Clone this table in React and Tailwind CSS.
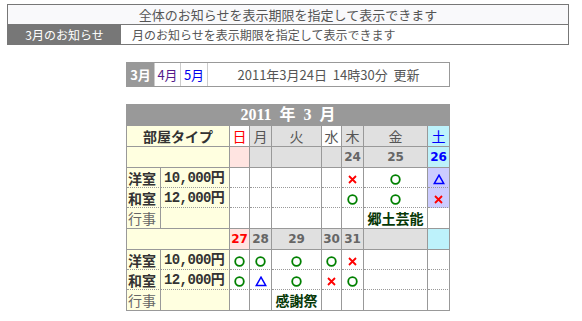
const JP = "font-['Noto_Sans_CJK_JP',sans-serif]"

const days = [
  { label: '日', color: 'text-[#ff0000]', head: 'bg-white', date: 'bg-[#ffe4e1]' },
  { label: '月', color: 'text-[#555]', head: 'bg-[#e0e0e0]', date: 'bg-[#e0e0e0]' },
  { label: '火', color: 'text-[#555]', head: 'bg-[#e0e0e0]', date: 'bg-[#e0e0e0]' },
  { label: '水', color: 'text-[#555]', head: 'bg-white', date: 'bg-[#e0e0e0]' },
  { label: '木', color: 'text-[#555]', head: 'bg-[#e0e0e0]', date: 'bg-[#e0e0e0]' },
  { label: '金', color: 'text-[#555]', head: 'bg-[#e0e0e0]', date: 'bg-[#e0e0e0]' },
  { label: '土', color: 'text-[#0000ff]', head: 'bg-[#bdf2fb]', date: 'bg-[#bdf2fb]' },
]

const weeks = [
  {
    dates: [null, null, null, null, 24, 25, 26],
    western: ['', '', '', '', 'x', 'o', 't'],
    japanese: ['', '', '', '', 'o', 'o', 'x'],
    events: ['', '', '', '', '', '郷土芸能', ''],
    lavender: [6],
  },
  {
    dates: [27, 28, 29, 30, 31, null, null],
    western: ['o', 'o', 'o', 'o', 'x', '', ''],
    japanese: ['o', 't', 'o', 'x', 'o', '', ''],
    events: ['', '', '感謝祭', '', '', '', ''],
    lavender: [],
  },
]

// availability marks: o = 空き, t = 残りわずか, x = 満室
function Mark({ m }) {
  if (m === 'o')
    return (
      <svg width="11" height="11" viewBox="0 0 11 11" className="inline-block align-middle">
        <circle cx="5.5" cy="5.5" r="4.3" fill="none" stroke="#008000" strokeWidth="1.8" />
      </svg>
    )
  if (m === 'x')
    return (
      <svg width="11" height="11" viewBox="0 0 11 11" className="inline-block align-middle">
        <path d="M2 2L9 9M9 2L2 9" stroke="#ff0000" strokeWidth="1.8" />
      </svg>
    )
  if (m === 't')
    return (
      <svg width="12" height="11" viewBox="0 0 12 11" className="inline-block align-middle">
        <path d="M6 1.2L10.8 9.6H1.2Z" fill="none" stroke="#0000ff" strokeWidth="1.5" />
      </svg>
    )
  return null
}

const cell = 'border-r border-b border-[#999] p-0 text-center align-middle'
const dotted = '[border-bottom-style:dotted]'

function Week({ w }) {
  return (
    <>
      <tr className="h-[21px]">
        <td colSpan={2} className={`${cell} bg-[#ffffe0]`}></td>
        {w.dates.map((d, i) => (
          <td
            key={i}
            className={`${cell} ${days[i].date} font-['DejaVu_Sans',sans-serif] text-[12px] font-bold ${
              i === 0 ? 'text-[#ff0000]' : i === 6 ? 'text-[#0000ff]' : 'text-[#666]'
            }`}
          >
            {d}
          </td>
        ))}
      </tr>
      {[
        { name: '洋室', price: '10,000円', data: w.western },
        { name: '和室', price: '12,000円', data: w.japanese },
      ].map((r) => (
        <tr key={r.name} className="h-[20px]">
          <td className={`${cell} ${dotted} bg-[#ffffe0] text-left pl-[1px] text-[14px] font-bold text-[#333]`}>
            {r.name}
          </td>
          <td className={`${cell} ${dotted} bg-[#ffffe0] text-left pl-[3px] font-['Liberation_Mono','Noto_Sans_CJK_JP',monospace] text-[14px] tracking-[-0.6px] font-bold text-[#333]`}>
            {r.price}
          </td>
          {r.data.map((m, i) => (
            <td key={i} className={`${cell} ${dotted} ${w.lavender.includes(i) ? 'bg-[#ccccff]' : 'bg-white'}`}>
              <Mark m={m} />
            </td>
          ))}
        </tr>
      ))}
      <tr className="h-[21px]">
        <td className={`${cell} bg-[#ffffe0] text-left pl-[1px] text-[14px] text-[#666]`}>行事</td>
        <td className={`${cell} bg-[#ffffe0]`}></td>
        {w.events.map((e, i) => (
          <td key={i} className={`${cell} bg-white text-[14px] font-bold text-[#063806] whitespace-nowrap`}>
            {e}
          </td>
        ))}
      </tr>
    </>
  )
}

export default function App() {
  return (
    <div className={`w-[582px] h-[321px] bg-white pt-[4px] ${JP}`}>
      {/* notice box */}
      <div className="ml-[7px] w-[562px] border border-[#777]">
        <div className="h-[20px] bg-[#f9f9fb] border-b border-[#777] flex items-center justify-center text-[13px] text-[#555]">
          全体のお知らせを表示期限を指定して表示できます
        </div>
        <div className="h-[19px] flex">
          <div className="w-[113px] bg-[#777] text-white text-[12px] flex items-center justify-center">
            3月のお知らせ
          </div>
          <div className="flex-1 flex items-center pl-[11px] text-[12px] text-[#555]">
            月のお知らせを表示期限を指定して表示できます
          </div>
        </div>
      </div>

      {/* month tabs */}
      <div className="mt-[17px] ml-[126px] w-[324px] h-[25px] border border-[#999] flex text-[13px]">
        <div className="w-[27px] bg-[#999] text-white font-bold flex items-center justify-center">3月</div>
        <div className="w-[26px] border-l border-[#ccc] text-[#551a8b] flex items-center justify-center">4月</div>
        <div className="w-[27px] border-l border-[#ccc] text-[#0000ee] flex items-center justify-center">5月</div>
        <div className="flex-1 border-l border-[#ccc] text-[13px] text-[#555] flex items-center justify-center">
          2011年3月24日&nbsp;&nbsp;14時30分&nbsp;&nbsp;更新
        </div>
      </div>

      {/* calendar */}
      <table className="mt-[17px] ml-[126px] w-[323px] table-fixed border-separate border-spacing-0 border-l border-t border-[#999] leading-[14px]">
        <colgroup>
          <col className="w-[34px]" />
          <col className="w-[69px]" />
          <col className="w-[20px]" />
          <col className="w-[22px]" />
          <col className="w-[50px]" />
          <col className="w-[20px]" />
          <col className="w-[22px]" />
          <col className="w-[64px]" />
          <col className="w-[22px]" />
        </colgroup>
        <tbody>
          <tr className="h-[21px]">
            <th
              colSpan={9}
              className={`${cell} bg-[#999] text-white font-bold text-[16px] font-['Liberation_Serif','Noto_Sans_CJK_JP',serif]`}
            >
              2011&nbsp;&nbsp;年&nbsp;&nbsp;3&nbsp;&nbsp;月
            </th>
          </tr>
          <tr className="h-[21px]">
            <td colSpan={2} className={`${cell} bg-[#ffffe0] text-[14px] font-bold text-[#333]`}>
              部屋タイプ
            </td>
            {days.map((d) => (
              <td key={d.label} className={`${cell} ${d.head} ${d.color} text-[14px]`}>
                {d.label}
              </td>
            ))}
          </tr>
          {weeks.map((w, i) => (
            <Week key={i} w={w} />
          ))}
        </tbody>
      </table>
    </div>
  )
}
